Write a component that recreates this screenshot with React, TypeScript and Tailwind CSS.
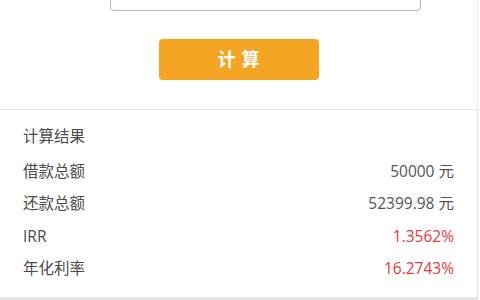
export default function App() {
  const rows = [
    { label: '借款总额', value: '50000 元', red: false },
    { label: '还款总额', value: '52399.98 元', red: false },
    { label: 'IRR', value: '1.3562%', red: true },
    { label: '年化利率', value: '16.2743%', red: true },
  ]

  return (
    <div
      className="w-[480px] h-[300px] overflow-hidden bg-white flex flex-col text-[15.5px] text-[#4a4a4a]"
      style={{ fontFamily: '"Open Sans", "Noto Sans CJK SC", sans-serif' }}
    >
      <div className="h-[109px] shrink-0 flex flex-col items-center border-r border-[#eee] w-[478px]">
        <div className="ml-[54px] mt-[-30px] w-[311px] h-[41px] rounded-[4px] border border-[#b5b5b5] bg-white" />
        <button className="mt-[28px] w-[160px] h-[41px] rounded-[4px] bg-[#f5a524] text-white text-[18px] font-bold tracking-[6px] pl-[6px]">
          计算
        </button>
      </div>
      <div className="flex-1 w-[478px] border-t border-r border-b-[3px] border-t-[#e3e3e3] border-r-[#dcdcdc] border-b-[#e8e8e8] flex flex-col pl-[23px] pr-[23px]">
        <div className="pt-[15px] h-[45px] leading-[22px]">计算结果</div>
        {rows.map((r) => (
          <div key={r.label} className="flex justify-between items-center h-[32.5px]">
            <span>{r.label}</span>
            <span className={r.red ? 'text-[#e3393d]' : 'text-[#555]'}>{r.value}</span>
          </div>
        ))}
      </div>
    </div>
  )
}
